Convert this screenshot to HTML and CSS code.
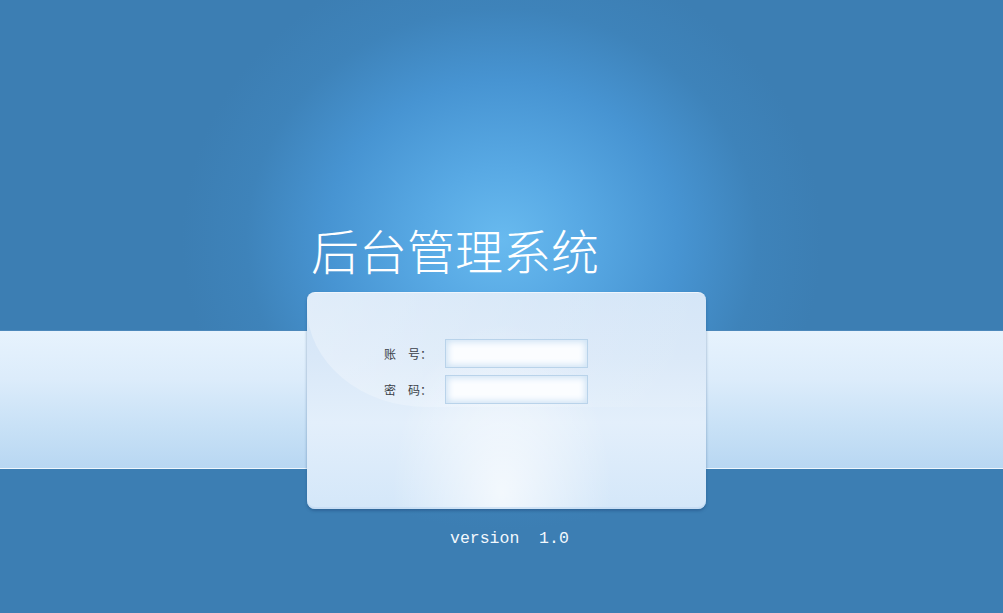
FILE: index.html
```html
<!DOCTYPE html>
<html lang="zh-CN">
<head>
<meta charset="utf-8">
<title>后台管理系统</title>
<link rel="stylesheet" href="styles.css">
</head>
<body>
<div class="page">
  <div class="stage">
    <h1 class="title">后台管理系统</h1>
    <form class="card">
      <div class="row">
        <label class="label" for="acc">账　号：</label>
        <input class="field" id="acc" type="text">
      </div>
      <div class="row">
        <label class="label" for="pwd">密　码：</label>
        <input class="field" id="pwd" type="password">
      </div>
    </form>
    <div class="version">version&nbsp;&nbsp;1.0</div>
  </div>
</div>
</body>
</html>
```

FILE: styles.css
```css
html, body {
  margin: 0;
  padding: 0;
  height: 100%;
}
body {
  font-family: "Noto Sans CJK SC", "Liberation Sans", sans-serif;
}
.page {
  min-height: 613px;
  height: 100%;
  background:
    linear-gradient(#4c88bb, #4c88bb) 0 330px / 100% 1px no-repeat,
    linear-gradient(#eef6fd, #eef6fd) 0 468px / 100% 1px no-repeat,
    linear-gradient(#e7f3fd 0%, #dcecfb 35%, #c8e1f6 70%, #b8d7f2 100%) 0 331px / 100% 137px no-repeat,
    radial-gradient(ellipse 320px 290px at 502px 240px, #68baef 0%, #58a9e4 25%, #4794d2 55%, #3e83ba 80%, #3c7eb3 100%),
    #3c7eb3;
  overflow: hidden;
}
.stage {
  display: flex;
  flex-direction: column;
  align-items: flex-start;
  padding-left: 307px;
  padding-top: 220px;
}
.title {
  margin: 0 0 13px 4px;
  font-family: "Noto Sans CJK SC", sans-serif;
  font-weight: 300;
  font-size: 48px;
  line-height: 59px;
  color: #fff;
  letter-spacing: 0;
}
.card {
  box-sizing: border-box;
  width: 399px;
  height: 217px;
  margin: 0;
  padding: 46px 0 0 77px;
  border-radius: 8px;
  border-top: 1px solid #eef5fd;
  background:
    radial-gradient(ellipse 110px 170px at 195px 200px, rgba(255,255,255,0.7), rgba(255,255,255,0) 100%),
    linear-gradient(180deg, #d3e5f7 0%, #d9e8f8 30%, #e3effb 60%, #d4e7f9 100%);
  box-shadow: 0 2px 3px rgba(30, 70, 120, 0.45), inset 0 -2px 0 rgba(190, 215, 240, 0.6);
  display: flex;
  flex-direction: column;
  gap: 7px;
  position: relative;
  overflow: hidden;
}
.card::before {
  content: "";
  position: absolute;
  left: 0;
  top: 0;
  width: 100%;
  height: 114px;
  border-bottom-left-radius: 120px 100px;
  background: linear-gradient(90deg, rgba(255, 255, 255, 0.3), rgba(255, 255, 255, 0.12) 60%, rgba(255, 255, 255, 0.05));
  pointer-events: none;
}
.row {
  display: flex;
  align-items: center;
  position: relative;
}
.label {
  width: 48px;
  margin-right: 13px;
  font-size: 12px;
  line-height: 16px;
  color: #3a3f48;
  white-space: nowrap;
}
.field {
  box-sizing: border-box;
  width: 143px;
  height: 29px;
  margin: 0;
  padding: 0 6px;
  border: 1px solid #b9d3ea;
  background: #fbfdff;
  box-shadow: inset 0 0 6px 2px #cfe3f5;
  outline: none;
  font-size: 12px;
}
.version {
  margin: 20px 0 0 143px;
  font-family: "Liberation Mono", "DejaVu Sans Mono", monospace;
  font-size: 16.5px;
  line-height: 20px;
  color: #f2f8fd;
}
```
